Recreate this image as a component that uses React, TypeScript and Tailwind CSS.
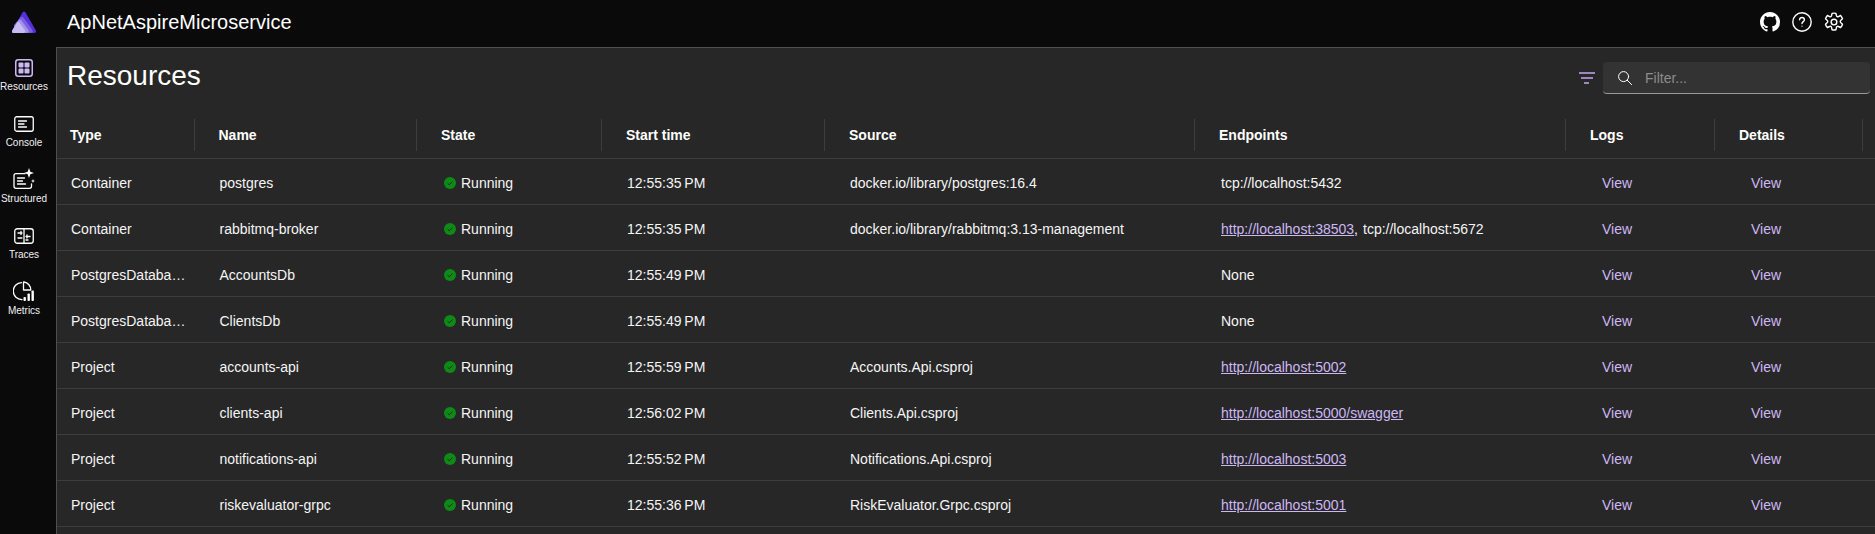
import React from "react";

const cols = "grid grid-cols-[148.5px_222.5px_185px_223px_370px_371px_149px_148px]";

function Logo() {
  return (
    <svg width="24" height="22" viewBox="0 0 24 22" fill="none">
      <path d="M10.8 1.1Q12 -0.3 13.2 1.1L23.6 19Q25 22 22 22H2Q-1 22 .4 19Z" fill="#5530d8" />
      <path d="M8.6 6.4Q10 5 11.4 6.4L20.4 19Q21.6 22 18.6 22H3L2 14Z" fill="#7a5fe0" />
      <path d="M6.8 9Q8 7.8 9.2 9L16.4 19Q17.6 22 14.6 22H2Q-.8 22 .4 19.2Z" fill="#a591ea" />
      <path d="M5 11.4Q6.2 10.2 7.4 11.4L12.8 19Q14 22 10.8 22H2Q-.8 22 .4 19.2Z" fill="#c8baf2" />
    </svg>
  );
}

const IconResources = () => (
  <svg width="18" height="18" viewBox="0 0 18 18" fill="none">
    <rect x="0.75" y="0.75" width="16.5" height="16.5" rx="2.5" stroke="#cdb8f3" strokeWidth="1.5" />
    <rect x="3.5" y="3.5" width="5" height="5" rx="1" fill="#cdb8f3" />
    <rect x="9.5" y="3.5" width="5" height="5" rx="1" fill="#cdb8f3" />
    <rect x="3.5" y="9.5" width="5" height="5" rx="1" fill="#cdb8f3" />
    <rect x="9.5" y="9.5" width="5" height="5" rx="1" fill="#cdb8f3" />
  </svg>
);

const IconConsole = () => (
  <svg width="20" height="16" viewBox="0 0 20 16" fill="none" stroke="#fff" strokeWidth="1.3" strokeLinecap="round">
    <rect x="0.75" y="0.75" width="18.5" height="14.5" rx="2" />
    <path d="M4.5 5h8M4.5 8h5.5M4.5 11h8" />
  </svg>
);

const IconStructured = () => (
  <svg width="22" height="21" viewBox="0 0 22 21" fill="none" className="-mt-[3px]">
    <path d="M12 5.7H3a2 2 0 0 0-2 2v10.6a2 2 0 0 0 2 2h13.5a2 2 0 0 0 2-2v-2.5" stroke="#fff" strokeWidth="1.3" strokeLinecap="round" />
    <path d="M4.5 10h7M4.5 13h5M4.5 16h8" stroke="#fff" strokeWidth="1.3" strokeLinecap="round" />
    <path d="M16 0l1.3 3.7L21 5l-3.7 1.3L16 10l-1.3-3.7L11 5l3.7-1.3z" fill="#fff" />
    <path d="M20 11l.6 1.4L22 13l-1.4.6L20 15l-.6-1.4L18 13l1.4-.6z" fill="#fff" />
  </svg>
);

const IconTraces = () => (
  <svg width="20" height="16" viewBox="0 0 20 16" fill="none" stroke="#fff" strokeWidth="1.3">
    <rect x="0.75" y="0.75" width="18.5" height="14.5" rx="2.5" />
    <path d="M10 1v14M4 5h4M7 3.5v3M12 8.5h4M13 7v3M4 10h4M12 12h2" strokeLinecap="round" />
  </svg>
);

const IconMetrics = () => (
  <svg width="22" height="20" viewBox="0 0 22 20" fill="none" className="-mt-[2px]">
    <path d="M10.5 1h.5a8 8 0 0 1 6.8 8h-7.3z" stroke="#fff" strokeWidth="1.3" strokeLinejoin="round" />
    <path d="M8.5 1.6A8.5 8.5 0 0 0 9 18.6" stroke="#fff" strokeWidth="1.3" strokeLinecap="round" />
    <rect x="10.5" y="16" width="2.4" height="4" rx="0.8" fill="#fff" />
    <rect x="14.5" y="12.5" width="2.4" height="7.5" rx="0.8" fill="#fff" />
    <rect x="18.5" y="9.5" width="2.4" height="10.5" rx="0.8" fill="#fff" />
  </svg>
);

const GitHub = () => (
  <svg width="20" height="20" viewBox="0 0 16 16" fill="#fff">
    <path d="M8 0C3.58 0 0 3.58 0 8c0 3.54 2.29 6.53 5.47 7.59.4.07.55-.17.55-.38 0-.19-.01-.82-.01-1.49-2.01.37-2.53-.49-2.69-.94-.09-.23-.48-.94-.82-1.13-.28-.15-.68-.52-.01-.53.63-.01 1.08.58 1.23.82.72 1.21 1.87.87 2.33.66.07-.52.28-.87.51-1.07-1.78-.2-3.64-.89-3.64-3.95 0-.87.31-1.59.82-2.15-.08-.2-.36-1.02.08-2.12 0 0 .67-.21 2.2.82.64-.18 1.32-.27 2-.27.68 0 1.36.09 2 .27 1.53-1.04 2.2-.82 2.2-.82.44 1.1.16 1.92.08 2.12.51.56.82 1.27.82 2.15 0 3.07-1.87 3.75-3.65 3.95.29.25.54.73.54 1.48 0 1.07-.01 1.93-.01 2.2 0 .21.15.46.55.38A8.013 8.013 0 0016 8c0-4.42-3.58-8-8-8z" />
  </svg>
);

const Help = () => (
  <svg width="20" height="20" viewBox="0 0 20 20" fill="none" stroke="#fff" strokeWidth="1.4" strokeLinecap="round">
    <circle cx="10" cy="10" r="9.2" />
    <path d="M7.6 7.8c0-1.4 1-2.3 2.4-2.3s2.4.9 2.4 2.2c0 1.9-2.4 1.9-2.4 3.9" />
    <circle cx="10" cy="14.2" r="0.6" fill="#fff" stroke="none" />
  </svg>
);

const Gear = () => (
  <svg width="20" height="20" viewBox="0 0 24 24" fill="none" stroke="#fff" strokeWidth="1.7" strokeLinejoin="round">
    <path d="M9.7 1.6a11 11 0 0 1 4.6 0l.7 2.9a1.6 1.6 0 0 0 2.3 1l2.6-1.3a11 11 0 0 1 2.3 4l-2.2 2a1.6 1.6 0 0 0 0 2.4l2.2 2a11 11 0 0 1-2.3 4l-2.6-1.2a1.6 1.6 0 0 0-2.3 1l-.7 2.9a11 11 0 0 1-4.6 0L9 18.4a1.6 1.6 0 0 0-2.3-1l-2.6 1.2a11 11 0 0 1-2.3-4l2.2-2a1.6 1.6 0 0 0 0-2.4l-2.2-2a11 11 0 0 1 2.3-4l2.6 1.3A1.6 1.6 0 0 0 9 4.5z" />
    <circle cx="12" cy="12" r="3.4" />
  </svg>
);

const FilterIcon = () => (
  <svg width="16" height="12" viewBox="0 0 16 12" fill="none" stroke="#c9a6f2" strokeWidth="1.4">
    <path d="M0 1h16M2 6h12M5 11h5" />
  </svg>
);

const Search = () => (
  <svg width="14" height="14" viewBox="0 0 14 14" fill="none" stroke="#fff" strokeWidth="1" strokeLinecap="round">
    <circle cx="5.6" cy="5.6" r="5" />
    <path d="M9.2 9.2l4.4 4.4" />
  </svg>
);

const Running = () => (
  <svg width="12" height="12" viewBox="0 0 12 12" className="shrink-0">
    <circle cx="6" cy="6" r="6" fill="#0e8a16" />
    <path d="M3.6 6.2l1.7 1.6 3.1-3.2" fill="none" stroke="#1f2a1f" strokeWidth="1" />
  </svg>
);

const navItems = [
  { label: "Resources", icon: <IconResources /> },
  { label: "Console", icon: <IconConsole /> },
  { label: "Structured", icon: <IconStructured /> },
  { label: "Traces", icon: <IconTraces /> },
  { label: "Metrics", icon: <IconMetrics /> },
];

const headers = ["Type", "Name", "State", "Start time", "Source", "Endpoints", "Logs", "Details"];

type Ep = { t: string; link?: boolean };
const rows: { type: string; name: string; time: string; source: string; eps: Ep[] }[] = [
  { type: "Container", name: "postgres", time: "12:55:35\u202fPM", source: "docker.io/library/postgres:16.4", eps: [{ t: "tcp://localhost:5432" }] },
  { type: "Container", name: "rabbitmq-broker", time: "12:55:35\u202fPM", source: "docker.io/library/rabbitmq:3.13-management", eps: [{ t: "http://localhost:38503", link: true }, { t: "tcp://localhost:5672" }] },
  { type: "PostgresDataba…", name: "AccountsDb", time: "12:55:49\u202fPM", source: "", eps: [{ t: "None" }] },
  { type: "PostgresDataba…", name: "ClientsDb", time: "12:55:49\u202fPM", source: "", eps: [{ t: "None" }] },
  { type: "Project", name: "accounts-api", time: "12:55:59\u202fPM", source: "Accounts.Api.csproj", eps: [{ t: "http://localhost:5002", link: true }] },
  { type: "Project", name: "clients-api", time: "12:56:02\u202fPM", source: "Clients.Api.csproj", eps: [{ t: "http://localhost:5000/swagger", link: true }] },
  { type: "Project", name: "notifications-api", time: "12:55:52\u202fPM", source: "Notifications.Api.csproj", eps: [{ t: "http://localhost:5003", link: true }] },
  { type: "Project", name: "riskevaluator-grpc", time: "12:55:36\u202fPM", source: "RiskEvaluator.Grpc.csproj", eps: [{ t: "http://localhost:5001", link: true }] },
];

const cell = "flex items-center pl-[14px] min-w-0";

export default function App() {
  return (
    <div className="h-screen w-full overflow-hidden flex flex-col bg-[#0a0a0a] text-[#f5f5f5] text-[14px] font-['Liberation_Sans',Arial,sans-serif]">
      <header className="h-[47px] shrink-0 flex items-center">
        <div className="w-[56px] flex justify-center pr-[8px] mb-[4px]">
          <Logo />
        </div>
        <div className="ml-[11px] text-[20px] text-white leading-[28px] mb-[3px]">ApNetAspireMicroservice</div>
        <div className="ml-auto flex items-center gap-[12px] pr-[31px] mb-[3px]">
          <GitHub />
          <Help />
          <Gear />
        </div>
      </header>
      <div className="flex-1 flex min-h-0">
        <nav className="w-[56px] shrink-0 pr-[8px] pt-[9px]">
          {navItems.map((n) => (
            <div key={n.label} className="h-14 flex flex-col items-center">
              <div className="h-6 flex items-center justify-center">{n.icon}</div>
              <div className="text-[10px] leading-[12px] mt-px text-[#f0f0f0]">{n.label}</div>
            </div>
          ))}
        </nav>
        <main className="flex-1 min-w-0 bg-[#272727] border-l border-t border-[#4f4f4f]">
          <div className="h-[60px] flex items-start justify-between">
            <h1 className="ml-[10px] mt-[9px] text-[28px] leading-[38px] text-white">Resources</h1>
            <div className="flex items-center mt-[14px] mr-[5px]">
              <FilterIcon />
              <div className="ml-[8px] w-[267px] h-[32px] rounded-[4px] bg-[#333333] border-b border-[#9a9a9a] flex items-center pl-[15px] pt-px">
                <Search />
                <span className="ml-[13px] text-[#8c8c8c]">Filter...</span>
              </div>
            </div>
          </div>
          <div className={`${cols} h-[51px] pt-[4px] border-b border-[#3d3d3d]`}>
            {headers.map((h) => (
              <div key={h} className="flex items-center justify-between pl-[13px] pr-[11px]">
                <span className="font-bold text-white">{h}</span>
                <span className="w-px h-8 bg-[#3d3d3d]" />
              </div>
            ))}
          </div>
          {rows.map((r) => (
            <div key={r.name} className={`${cols} h-[46px] pt-[3px] border-b border-[#3d3d3d]`}>
              <div className={cell}>{r.type}</div>
              <div className={cell}>{r.name}</div>
              <div className="flex items-center pl-[16px] gap-[5px]">
                <Running />
                <span>Running</span>
              </div>
              <div className={cell}>{r.time}</div>
              <div className={cell}>{r.source}</div>
              <div className="flex items-center pl-[15px] min-w-0">
                {r.eps.map((e, i) => (
                  <React.Fragment key={e.t}>
                    {i > 0 && <span className="mr-[5px]">,</span>}
                    <span className={e.link ? "text-[#cdb8f5] underline" : ""}>{e.t}</span>
                  </React.Fragment>
                ))}
              </div>
              <div className="flex items-center pl-[25px] text-[#cdb8f5]">View</div>
              <div className="flex items-center pl-[25px] text-[#cdb8f5]">View</div>
            </div>
          ))}
        </main>
      </div>
    </div>
  );
}
